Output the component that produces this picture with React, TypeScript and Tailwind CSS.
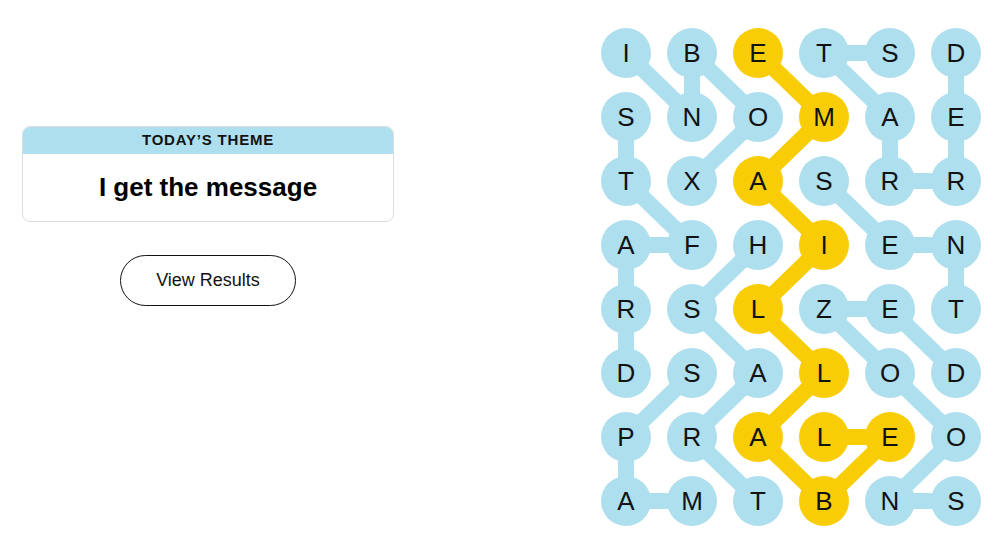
import { Fragment } from 'react';

const BLUE = '#aedfee';
const YELLOW = '#f8cd05';

const rows = [
  'IBETSD',
  'SNOMAE',
  'TXASRR',
  'AFHIEN',
  'RSLZET',
  'DSALOD',
  'PRALEO',
  'AMTBNS',
];

// found words, as [col, row] paths
const words: { path: [number, number][]; spangram?: boolean }[] = [
  { path: [[0, 0], [1, 1], [1, 0], [2, 1], [1, 2]] },
  { path: [[0, 5], [0, 4], [0, 3], [1, 3], [0, 2], [0, 1]] },
  { path: [[1, 5], [0, 6], [0, 7], [1, 7]] },
  { path: [[2, 7], [1, 6], [2, 5], [1, 4], [2, 3]] },
  { path: [[4, 0], [3, 0], [4, 1], [4, 2], [5, 2], [5, 1], [5, 0]] },
  { path: [[3, 2], [4, 3], [5, 3], [5, 4]] },
  { path: [[5, 7], [4, 7], [5, 6], [4, 5], [3, 4], [4, 4], [5, 5]] },
  {
    path: [[2, 0], [3, 1], [2, 2], [3, 3], [2, 4], [3, 5], [2, 6], [3, 7], [4, 6], [3, 6]],
    spangram: true,
  },
];

const spangramCells = new Set(
  words.filter((w) => w.spangram).flatMap((w) => w.path.map(([c, r]) => `${c}-${r}`))
);

const cx = (c: number) => 25 + c * 66;
const cy = (r: number) => 25 + r * 64;

function Board() {
  return (
    <div className="relative">
      {/* connectors under the letters */}
      <svg className="absolute inset-0" width={380} height={498}>
        {words.map((w, i) => (
          <polyline
            key={i}
            points={w.path.map(([c, r]) => `${cx(c)},${cy(r)}`).join(' ')}
            fill="none"
            stroke={w.spangram ? YELLOW : BLUE}
            strokeWidth={16}
            strokeLinejoin="round"
            strokeLinecap="round"
          />
        ))}
      </svg>
      <div className="relative grid grid-cols-[repeat(6,50px)] gap-x-4 gap-y-[14px]">
        {rows.map((row, r) => (
          <Fragment key={r}>
            {row.split('').map((ch, c) => (
              <div
                key={c}
                className={
                  'flex h-[50px] w-[50px] items-center justify-center rounded-full text-[26px] leading-none text-[#121212] ' +
                  (spangramCells.has(`${c}-${r}`) ? 'bg-[#f8cd05]' : 'bg-[#aedfee]')
                }
              >
                {ch}
              </div>
            ))}
          </Fragment>
        ))}
      </div>
    </div>
  );
}

export default function App() {
  return (
    <div className="flex h-[552px] w-[1000px] bg-white font-['Liberation_Sans',Arial,sans-serif]">
      <div className="ml-[22px] flex w-[372px] flex-col items-center pt-[126px]">
        <div className="w-full overflow-hidden rounded-lg border border-[#dcdcdc]">
          <div className="flex h-[27px] items-center justify-center bg-[#aedfee] text-[15px] font-bold tracking-[0.8px] text-[#121212]">
            TODAY’S THEME
          </div>
          <div className="flex h-[67px] items-center justify-center text-[26px] font-bold text-black">
            I get the message
          </div>
        </div>
        <button className="mt-[33px] h-[51px] w-[176px] rounded-full border border-[#121212] text-[18px] text-[#121212]">
          View Results
        </button>
      </div>
      <div className="ml-auto mr-[19px] pt-[28px]">
        <Board />
      </div>
    </div>
  );
}
